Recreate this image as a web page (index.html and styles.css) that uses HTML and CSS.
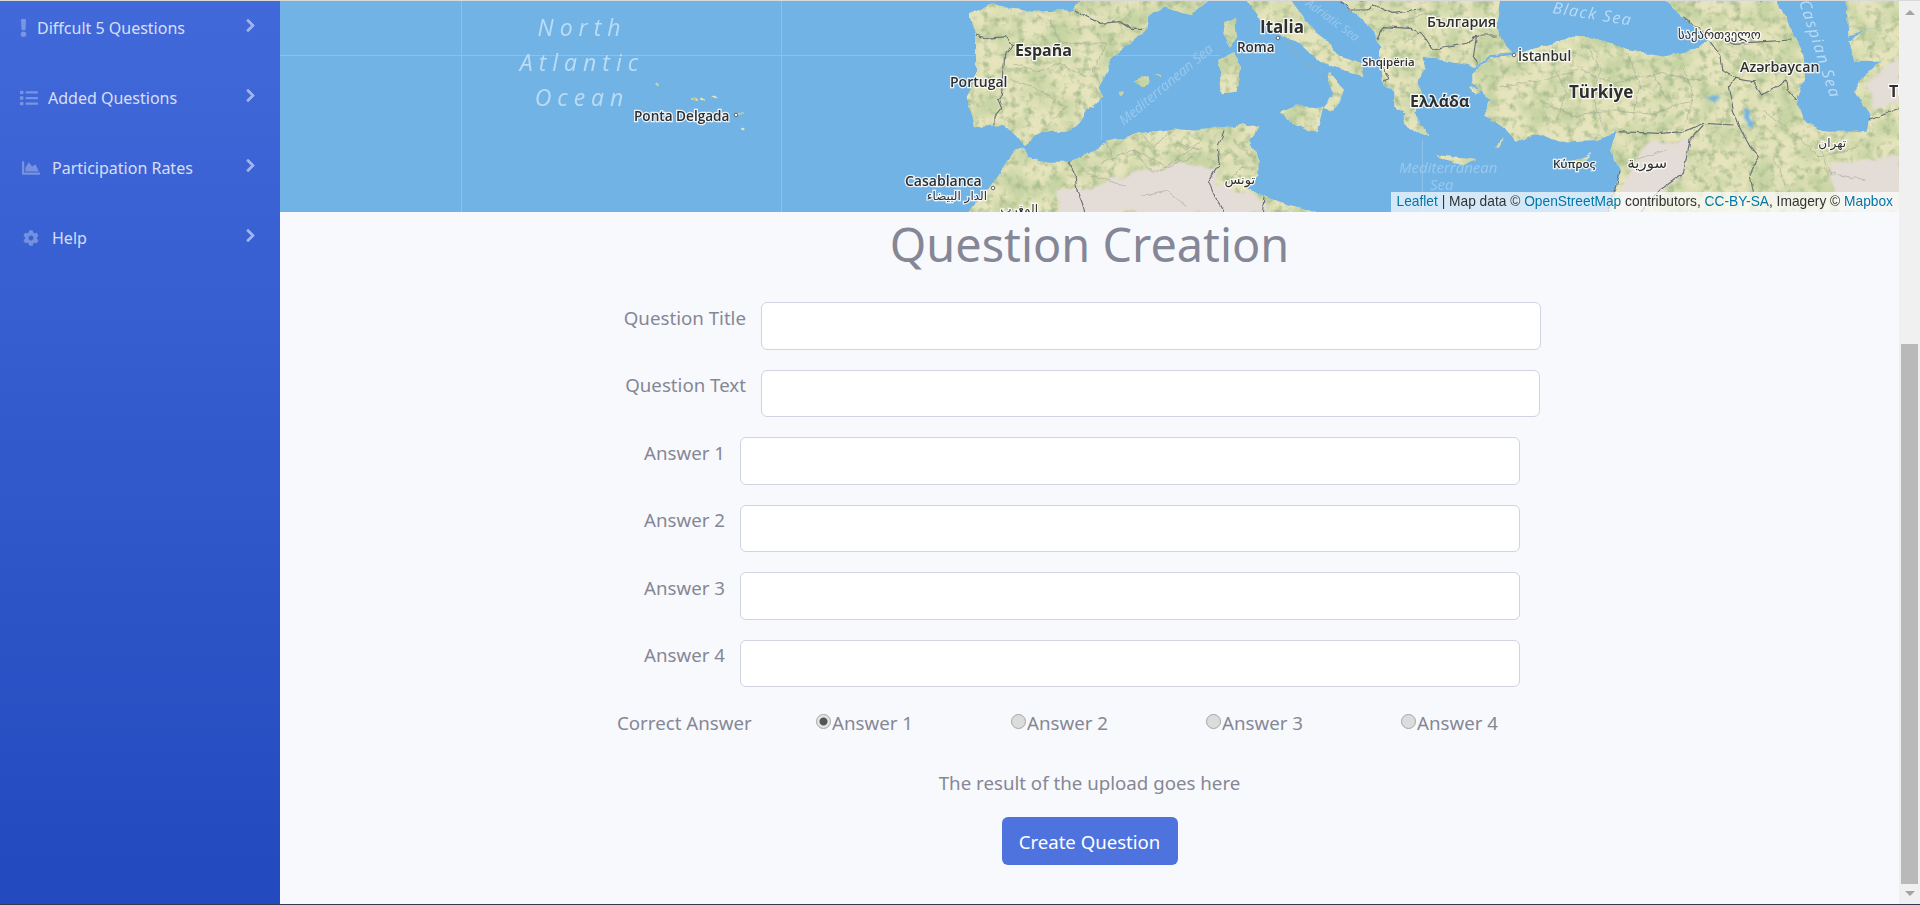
FILE: index.html
```html
<!DOCTYPE html>
<html lang="en">
<head>
    <meta charset="UTF-8">
    <meta name="viewport" content="width=device-width, initial-scale=1.0">
    <title>Question Creation</title>
    <link rel="stylesheet" href="styles.css">
</head>
<body>

    <div class="page">
        <nav class="sidebar">
            <a class="nav-item" href="#">
                <svg class="nav-icon icon-exclamation" viewBox="0 0 192 512"><path d="M176 432c0 44.112-35.888 80-80 80s-80-35.888-80-80 35.888-80 80-80 80 35.888 80 80zM25.26 25.199l13.6 272C39.499 310.972 50.041 320 64 320h64c13.959 0 24.501-9.028 25.14-22.801l13.6-272C167.401 11.5 156.859 0 144 0H48C35.141 0 24.599 11.5 25.26 25.199z"/></svg>
                <span class="nav-label">Diffcult 5 Questions</span>
                <svg class="nav-chevron" viewBox="0 0 320 512"><path d="M285.476 272.971L91.132 467.314c-9.373 9.373-24.569 9.373-33.941 0l-22.667-22.667c-9.357-9.357-9.375-24.522-.04-33.901L188.505 256 34.484 101.255c-9.335-9.379-9.317-24.544.04-33.901l22.667-22.667c9.373-9.373 24.569-9.373 33.941 0L285.475 239.03c9.373 9.372 9.373 24.568.001 33.941z"/></svg>
            </a>
            <a class="nav-item" href="#">
                <svg class="nav-icon icon-list" viewBox="0 0 512 512"><path d="M80 368H16a16 16 0 0 0-16 16v64a16 16 0 0 0 16 16h64a16 16 0 0 0 16-16v-64a16 16 0 0 0-16-16zm0-320H16A16 16 0 0 0 0 64v64a16 16 0 0 0 16 16h64a16 16 0 0 0 16-16V64a16 16 0 0 0-16-16zm0 160H16a16 16 0 0 0-16 16v64a16 16 0 0 0 16 16h64a16 16 0 0 0 16-16v-64a16 16 0 0 0-16-16zm416 176H176a16 16 0 0 0-16 16v32a16 16 0 0 0 16 16h320a16 16 0 0 0 16-16v-32a16 16 0 0 0-16-16zm0-320H176a16 16 0 0 0-16 16v32a16 16 0 0 0 16 16h320a16 16 0 0 0 16-16V80a16 16 0 0 0-16-16zm0 160H176a16 16 0 0 0-16 16v32a16 16 0 0 0 16 16h320a16 16 0 0 0 16-16v-32a16 16 0 0 0-16-16z"/></svg>
                <span class="nav-label">Added Questions</span>
                <svg class="nav-chevron" viewBox="0 0 320 512"><path d="M285.476 272.971L91.132 467.314c-9.373 9.373-24.569 9.373-33.941 0l-22.667-22.667c-9.357-9.357-9.375-24.522-.04-33.901L188.505 256 34.484 101.255c-9.335-9.379-9.317-24.544.04-33.901l22.667-22.667c9.373-9.373 24.569-9.373 33.941 0L285.475 239.03c9.373 9.372 9.373 24.568.001 33.941z"/></svg>
            </a>
            <a class="nav-item" href="#">
                <svg class="nav-icon icon-chart" viewBox="0 0 512 512"><path d="M500 384c6.6 0 12 5.4 12 12v40c0 6.6-5.4 12-12 12H12c-6.6 0-12-5.4-12-12V76c0-6.6 5.4-12 12-12h40c6.6 0 12 5.4 12 12v308h436zM372.7 159.5L288 216l-85.3-113.7c-5.1-6.8-15.5-6.3-19.9 1L96 248v104h384l-89.9-187.8c-3.2-6.5-11.4-8.7-17.4-4.7z"/></svg>
                <span class="nav-label">Participation Rates</span>
                <svg class="nav-chevron" viewBox="0 0 320 512"><path d="M285.476 272.971L91.132 467.314c-9.373 9.373-24.569 9.373-33.941 0l-22.667-22.667c-9.357-9.357-9.375-24.522-.04-33.901L188.505 256 34.484 101.255c-9.335-9.379-9.317-24.544.04-33.901l22.667-22.667c9.373-9.373 24.569-9.373 33.941 0L285.475 239.03c9.373 9.372 9.373 24.568.001 33.941z"/></svg>
            </a>
            <a class="nav-item" href="#">
                <svg class="nav-icon icon-cog" viewBox="0 0 512 512"><path d="M487.4 315.7l-42.6-24.6c4.3-23.2 4.3-47 0-70.2l42.6-24.6c4.9-2.8 7.1-8.6 5.5-14-11.1-35.6-30-67.8-54.7-94.6-3.8-4.1-10-5.1-14.8-2.3L380.8 110c-17.9-15.4-38.5-27.3-60.8-35.1V25.8c0-5.6-3.9-10.5-9.4-11.7-36.7-8.2-74.3-7.8-109.2 0-5.5 1.2-9.4 6.1-9.4 11.7V75c-22.2 7.9-42.8 19.8-60.8 35.1L88.7 85.5c-4.9-2.8-11-1.9-14.8 2.3-24.7 26.7-43.6 58.9-54.7 94.6-1.7 5.4.6 11.2 5.5 14L67.3 221c-4.3 23.2-4.3 47 0 70.2l-42.6 24.6c-4.9 2.8-7.1 8.6-5.5 14 11.1 35.6 30 67.8 54.7 94.6 3.8 4.1 10 5.1 14.8 2.3l42.6-24.6c17.9 15.4 38.5 27.3 60.8 35.1v49.2c0 5.6 3.9 10.5 9.4 11.7 36.7 8.2 74.3 7.8 109.2 0 5.5-1.2 9.4-6.1 9.4-11.7v-49.2c22.2-7.9 42.8-19.8 60.8-35.1l42.6 24.6c4.9 2.8 11 1.9 14.8-2.3 24.7-26.7 43.6-58.9 54.7-94.6 1.5-5.5-.7-11.3-5.6-14.1zM256 336c-44.1 0-80-35.9-80-80s35.9-80 80-80 80 35.9 80 80-35.9 80-80 80z"/></svg>
                <span class="nav-label">Help</span>
                <svg class="nav-chevron" viewBox="0 0 320 512"><path d="M285.476 272.971L91.132 467.314c-9.373 9.373-24.569 9.373-33.941 0l-22.667-22.667c-9.357-9.357-9.375-24.522-.04-33.901L188.505 256 34.484 101.255c-9.335-9.379-9.317-24.544.04-33.901l22.667-22.667c9.373-9.373 24.569-9.373 33.941 0L285.475 239.03c9.373 9.372 9.373 24.568.001 33.941z"/></svg>
            </a>
        </nav>

        <main class="main">
            <div class="map">
                <svg class="map-svg" viewBox="280 1 1619 211" width="1619" height="211">
                    <defs>
                        <filter id="land" filterUnits="userSpaceOnUse" x="280" y="0" width="1620" height="214" color-interpolation-filters="sRGB">
                            <feTurbulence type="fractalNoise" baseFrequency=".09" numOctaves="2" seed="4" result="wob"/>
                            <feDisplacementMap in="SourceGraphic" in2="wob" scale="6" xChannelSelector="R" yChannelSelector="G" result="shape"/>
                            <feTurbulence type="fractalNoise" baseFrequency=".04" numOctaves="3" seed="11"/>
                            <feColorMatrix type="matrix" values="0 0 0 0 .78  0 0 0 0 .83  0 0 0 0 .64  3 0 0 0 -1.2" result="green"/>
                            <feGaussianBlur in="green" stdDeviation="1" result="greenSoft"/>
                            <feComposite in="greenSoft" in2="shape" operator="in" result="tex"/>
                            <feTurbulence type="fractalNoise" baseFrequency=".12" numOctaves="3" seed="23"/>
                            <feColorMatrix type="matrix" values="0 0 0 0 .68  0 0 0 0 .75  0 0 0 0 .57  3 0 0 0 -1.45" result="dark"/>
                            <feGaussianBlur in="dark" stdDeviation=".7" result="darkSoft"/>
                            <feComposite in="darkSoft" in2="shape" operator="in" result="tex2"/>
                            <feMerge result="all"><feMergeNode in="shape"/><feMergeNode in="tex"/><feMergeNode in="tex2"/></feMerge>
                            <feGaussianBlur in="all" stdDeviation=".5"/>
                        </filter>
                        <filter id="desert" filterUnits="userSpaceOnUse" x="280" y="0" width="1620" height="214" color-interpolation-filters="sRGB">
                            <feTurbulence type="fractalNoise" baseFrequency=".05" numOctaves="3" seed="7"/>
                            <feDisplacementMap in="SourceGraphic" scale="12" xChannelSelector="R" yChannelSelector="G"/>
                            <feGaussianBlur stdDeviation="1"/>
                        </filter>
                        <filter id="wobble" filterUnits="userSpaceOnUse" x="280" y="0" width="1620" height="214" color-interpolation-filters="sRGB">
                            <feTurbulence type="fractalNoise" baseFrequency=".12" numOctaves="2" seed="3"/>
                            <feDisplacementMap in="SourceGraphic" scale="5" xChannelSelector="R" yChannelSelector="G"/>
                            <feGaussianBlur stdDeviation=".25"/>
                        </filter>
                    </defs>

                    <rect class="sea" x="280" y="0" width="1620" height="214"/>
                    <path class="seam" d="M461.5 0V212M781.5 0V212M280 55.5H1220M1101.5 100V140M1422.5 140V212"/>

                    <g filter="url(#land)">
                        <g class="land" transform="translate(900 0) scale(.33333)">
                            <path d="M210 45L270 8L300 20L400 35L520 30L545 0L925 0L870 45L790 22L745 48L738 90L700 122L640 170L612 225L595 262L610 292L560 330L530 380L490 395L420 395L375 435L340 400L310 375L222 382L200 290L228 240L228 110Z"/>
                            <path d="M205 640L270 560L345 450L375 445L385 470L440 485L505 485L560 465L620 425L720 400L830 385L900 390L970 385L1030 370L1075 385L1050 420L1075 470L1075 530L1040 560L1090 590L1255 640Z"/>
                            <path d="M1040 0L1085 60L1130 100L1200 130L1260 185L1300 200L1390 228L1380 190L1320 170L1280 120L1230 80L1170 0Z"/>
                            <path d="M1290 215L1332 270L1300 332L1270 325L1300 285L1280 230Z"/>
                            <path d="M1135 335L1180 320L1270 320L1250 400L1180 370Z"/>
                            <path d="M955 180L1005 155L1020 200L1010 275L965 280Z"/>
                            <path d="M975 70L1005 55L1010 110L990 140L970 100Z"/>
                            <path d="M705 240L745 225L750 250L730 262Z"/>
                            <path d="M768 222L785 225L785 232Z"/>
                            <path d="M658 275L672 280L660 290Z"/>
                        </g>
                        <g class="land" transform="translate(1400 0) scale(.33333)">
                            <path d="M-180 0L-150 30L-80 90L-60 140L-60 180L-55 240L-20 280L-20 320L20 340L5 370L60 400L90 410L40 340L70 290L50 240L80 210L70 170L230 200L270 165L340 160L300 120L290 70L300 0Z"/>
                            <path d="M220 220L270 172L340 165L440 135L530 110L600 115L680 150L790 170L880 150L930 120L850 50L790 0L1130 0L1170 80L1205 150L1215 230L1190 290L1210 360L1280 395L1400 395L1410 340L1365 275L1390 230L1440 185L1360 185L1345 125L1390 90L1440 90L1500 150L1500 640L620 640L660 510L630 450L650 395L590 420L480 425L410 400L350 425L310 380L250 350L270 300L220 250Z"/>
                            <path d="M1340 0L1500 0L1500 150L1440 90L1390 88L1345 110Z"/>
                            <path d="M110 465L225 480L190 495L130 480Z"/>
                            <path d="M510 490L578 458L540 492L512 502Z"/>
                            <path d="M210 260L240 270L225 280Z"/>
                            <path d="M285 440L308 415L300 440Z"/>
                        </g>
                        <g class="land">
                            <ellipse cx="657" cy="84" rx="1.5" ry="1.2"/>
                            <ellipse cx="694" cy="100" rx="4" ry="1.2"/>
                            <ellipse cx="703" cy="99" rx="3" ry="1.2"/>
                            <ellipse cx="714" cy="97" rx="2.5" ry="1.2"/>
                            <ellipse cx="741" cy="114" rx="3" ry="1.2"/>
                            <ellipse cx="744" cy="128" rx="1.5" ry="1.2"/>
                        </g>
                    </g>

                    <g class="desert" filter="url(#desert)">
                        <g transform="translate(900 0) scale(.33333)">
                            <path d="M480 640L475 560L560 570L700 520L830 490L960 500L940 545L1000 570L1090 600L1100 640Z"/>
                        </g>
                        <g transform="translate(1400 0) scale(.33333)">
                            <path d="M650 640L680 530L740 430L870 420L850 520L790 570L730 640Z"/>
                            <path d="M1290 490L1500 470L1500 640L1310 640Z"/>
                            <path d="M1400 250L1500 170L1500 300L1430 330Z"/>
                        </g>
                    </g>

                    <g class="water" filter="url(#desert)">
                        <g transform="translate(1400 0) scale(.33333)">
                            <path d="M915 300L960 282L945 312Z"/>
                            <path d="M1030 320L1045 325L1060 372L1045 380Z"/>
                        </g>
                    </g>

                    <g class="border" filter="url(#wobble)">
                        <g transform="translate(900 0) scale(.33333)">
                            <path d="M525 30L560 50L600 70L660 65L690 85L738 85"/>
                            <path d="M228 105L260 115L320 110L335 135L310 180L305 280L295 300L305 325L285 350L285 378"/>
                            <path d="M505 487L525 520L530 570L550 620L555 640"/>
                            <path d="M972 392L955 440L960 490L925 545L945 590L975 640"/>
                            <path d="M1095 590L1090 640"/>
                            <path d="M1320 0L1350 30L1400 30L1420 15L1480 40L1560 30"/>
                            <path d="M1430 120L1450 80L1530 85L1560 100"/>
                            <path d="M1440 180L1470 240L1450 245"/>
                        </g>
                        <g transform="translate(1400 0) scale(.33333)">
                            <path d="M850 50L900 90L1000 130L1090 125L1175 120"/>
                            <path d="M930 125L960 165L965 210L1005 235L985 260L1000 330L1020 385L1050 440L1075 470L1050 520L1060 575"/>
                            <path d="M650 395L780 400L850 395L910 370L1000 375"/>
                            <path d="M910 375L870 420L850 520L780 570L720 640"/>
                            <path d="M1005 235L1060 245L1085 285L1130 260L1160 240L1165 270L1190 300"/>
                            <path d="M60 90L100 150L200 130L240 105L290 105"/>
                            <path d="M230 105L220 170L235 190"/>
                            <path d="M660 510L650 560L620 640"/>
                            <path d="M1410 360L1500 325"/>
                        </g>
                    </g>

                    <g class="border-thin" filter="url(#wobble)">
                        <g transform="translate(900 0) scale(.33333)">
                            <path d="M340 190L420 215L480 190L560 230M400 260L500 320L440 380M330 240L400 260M545 130L620 130L580 210L600 250M450 60L480 130L545 130M600 490L700 450L800 500L900 430M560 520L680 560M700 450L760 520L880 470M620 425L640 480M720 400L760 440L830 385M830 430L900 450M1000 420L1050 470M1030 500L990 540M720 590L800 570L860 620M1150 110L1230 200L1290 230M1100 70L1170 60"/>
                        </g>
                        <g transform="translate(1400 0) scale(.33333)">
                            <path d="M300 260L420 240L540 210L640 250L780 220L900 240M420 300L520 350L640 330L760 340L880 300M460 200L500 280L470 360M760 220L800 300M560 130L600 210L580 300L620 400M680 160L720 250L700 340M850 190L880 290L860 370M1090 330L1180 400L1260 470L1380 440M1120 470L1160 560M1100 180L1130 230M1250 420L1290 520L1400 540M700 480L800 450M10 60L90 40L180 80M10 130L60 100"/>
                        </g>
                    </g>

                    <g class="city-dot">
                        <circle cx="736" cy="115" r="1.8"/>
                        <circle cx="1278" cy="38" r="1.8"/>
                        <circle cx="993" cy="188" r="1.8"/>
                        <circle cx="1514" cy="55" r="1.8"/>
                    </g>

                    <text class="ocean" x="582" y="36" text-anchor="middle">North</text>
                    <text class="ocean" x="582" y="71" text-anchor="middle">Atlantic</text>
                    <text class="ocean" x="582" y="106" text-anchor="middle">Ocean</text>

                    <text class="sea-label" font-size="14" transform="translate(1124 126) rotate(-40)">Mediterranean Sea</text>
                    <text class="sea-label" font-size="12" transform="translate(1305 5) rotate(36)">Adriatic Sea</text>
                    <text class="sea-label" font-size="15" x="1399" y="173">Mediterranean</text>
                    <text class="sea-label" font-size="15" x="1430" y="190">Sea</text>
                    <text class="sea-label spaced" font-size="16" transform="translate(1552 13) rotate(9)">Black Sea</text>
                    <text class="sea-label spaced" font-size="16" transform="translate(1799 2) rotate(72)">Caspian Sea</text>

                    <text class="place" font-size="13.6" x="634" y="121">Ponta Delgada</text>
                    <text class="place strong" font-size="17" x="1260" y="33">Italia</text>
                    <text class="place strong" font-size="16" x="1015" y="56">España</text>
                    <text class="place" font-size="13.5" x="1237" y="52">Roma</text>
                    <text class="place" font-size="14" x="950" y="87">Portugal</text>
                    <text class="place" font-size="11.5" x="1362" y="66">Shqipëria</text>
                    <text class="place" font-size="14" x="905" y="186">Casablanca</text>
                    <text class="place arabic" font-size="12" x="987" y="200" text-anchor="end">الدار البيضاء</text>
                    <text class="place arabic" font-size="12" x="1038" y="213" text-anchor="end">المغرب</text>
                    <text class="place arabic" font-size="13" x="1255" y="184" text-anchor="end">تونس</text>
                    <text class="place" font-size="14.3" x="1427" y="27">България</text>
                    <text class="place" font-size="13.5" x="1518" y="61">İstanbul</text>
                    <text class="place georgian" font-size="12.7" x="1678" y="39">საქართველო</text>
                    <text class="place" font-size="14.2" x="1740" y="72">Azərbaycan</text>
                    <text class="place strong" font-size="16" x="1410" y="107">Ελλάδα</text>
                    <text class="place strong" font-size="17" x="1569" y="98">Türkiye</text>
                    <text class="place" font-size="11.5" x="1553" y="168">Κύπρος</text>
                    <text class="place arabic" font-size="15" x="1667" y="168" text-anchor="end">سورية</text>
                    <text class="place arabic" font-size="12" x="1846" y="147" text-anchor="end">تهران</text>
                    <text class="place strong" font-size="16" x="1889" y="97">Türkmenistan</text>
                </svg>
                <div class="attribution"><a href="#">Leaflet</a> | Map data © <a href="#">OpenStreetMap</a> contributors, <a href="#">CC-BY-SA</a>, Imagery © <a href="#">Mapbox</a></div>
            </div>

            <h1 class="title">Question Creation</h1>

            <form class="question-form">
                <div class="form-row">
                    <label class="form-label" for="questionTitle">Question Title</label>
                    <input class="form-input" type="text" id="questionTitle">
                </div>
                <div class="form-row">
                    <label class="form-label" for="questionText">Question Text</label>
                    <input class="form-input text-input" type="text" id="questionText">
                </div>
                <div class="form-row answer-row">
                    <label class="form-label" for="answer1">Answer 1</label>
                    <input class="form-input" type="text" id="answer1">
                </div>
                <div class="form-row answer-row">
                    <label class="form-label" for="answer2">Answer 2</label>
                    <input class="form-input" type="text" id="answer2">
                </div>
                <div class="form-row answer-row">
                    <label class="form-label" for="answer3">Answer 3</label>
                    <input class="form-input" type="text" id="answer3">
                </div>
                <div class="form-row answer-row">
                    <label class="form-label" for="answer4">Answer 4</label>
                    <input class="form-input" type="text" id="answer4">
                </div>

                <div class="correct-row">
                    <span>Correct Answer</span>
                    <label class="radio-option"><input type="radio" name="correct" checked>Answer 1</label>
                    <label class="radio-option"><input type="radio" name="correct">Answer 2</label>
                    <label class="radio-option"><input type="radio" name="correct">Answer 3</label>
                    <label class="radio-option"><input type="radio" name="correct">Answer 4</label>
                </div>

                <p class="upload-result">The result of the upload goes here</p>
                <button class="create-btn" type="button">Create Question</button>
            </form>
        </main>

        <div class="scrollbar">
            <span class="arrow-up"></span>
            <span class="scroll-thumb"></span>
            <span class="arrow-down"></span>
        </div>
    </div>
    <div class="screen-edge"></div>

</body>
</html>
```

FILE: styles.css
```css
* {
    box-sizing: border-box;
}

body {
    margin: 0;
    height: 905px;
    overflow: hidden;
    display: flex;
    flex-direction: column;
    border-top: 1px solid #d9d9d9;
    background: #f8f9fc;
    color: #858796;
    font-family: "Noto Sans", "Open Sans", sans-serif;
}

.page {
    flex: 1;
    min-height: 0;
    display: flex;
}

.screen-edge {
    height: 1px;
    background: #3b3352;
}

/* sidebar */
.sidebar {
    width: 280px;
    flex-shrink: 0;
    padding-top: 7px;
    display: flex;
    flex-direction: column;
    gap: 30px;
    background: linear-gradient(180deg, #4269da 0%, #224abe 100%);
}

.nav-item {
    height: 40px;
    display: flex;
    align-items: center;
    padding: 0 25px 0 20px;
    color: rgba(255, 255, 255, 0.8);
    font-size: 16px;
    text-decoration: none;
}

.nav-icon {
    height: 18px;
    fill: rgba(255, 255, 255, 0.3);
    flex-shrink: 0;
}

.icon-exclamation {
    width: 7px;
    margin-right: 10px;
}

.icon-list {
    width: 18px;
    margin-right: 10px;
}

.icon-chart {
    width: 18px;
    margin-left: 2px;
    margin-right: 12px;
}

.icon-cog {
    width: 16px;
    margin-left: 3px;
    margin-right: 13px;
}

.nav-label {
    flex: 1;
}

.nav-chevron {
    width: 9px;
    height: 15px;
    margin-bottom: 5px;
    fill: #a0b3ea;
    stroke: #a0b3ea;
    stroke-width: 30;
}

/* main column */
.main {
    flex: 1;
    min-width: 0;
}

.map {
    position: relative;
    height: 211px;
    overflow: hidden;
}

.map-svg {
    display: block;
}

.sea,
.water {
    fill: #72b3e6;
}

.seam {
    stroke: #8cc1ea;
    stroke-width: 1;
    fill: none;
}

.land {
    fill: #e6e4bc;
}

.desert {
    fill: #e4dcd6;
}

.border {
    fill: none;
    stroke: #6a7076;
    stroke-width: 3.4;
}

.border-thin {
    fill: none;
    stroke: #a0a794;
    stroke-width: 1.8;
}

.city-dot {
    fill: #f4f4f4;
    stroke: #666;
    stroke-width: 1;
}

.ocean {
    font-family: "Open Sans", sans-serif;
    font-style: italic;
    font-size: 23px;
    letter-spacing: 6px;
    fill: #bcdcf4;
}

.sea-label {
    font-family: "Open Sans", sans-serif;
    font-style: italic;
    fill: #98c9ee;
}

.spaced {
    letter-spacing: 1.5px;
    fill: #bcdcf4;
}

.place {
    font-family: "Open Sans", "DejaVu Sans", sans-serif;
    font-weight: 600;
    fill: #2f2f2f;
    stroke: rgba(255, 255, 255, 0.85);
    stroke-width: 2.5px;
    paint-order: stroke;
    filter: blur(0.3px);
}

.strong {
    font-weight: 700;
}

.arabic,
.georgian {
    font-family: "DejaVu Sans", sans-serif;
    font-weight: 400;
}

.attribution {
    position: absolute;
    right: 0;
    bottom: 0;
    height: 20px;
    padding: 0 6px;
    background: rgba(255, 255, 255, 0.7);
    color: #333;
    font-family: "Liberation Sans", Arial, sans-serif;
    font-size: 13.75px;
    line-height: 20px;
    white-space: nowrap;
}

.attribution a {
    color: #0078a8;
    text-decoration: none;
}

/* form */
.title {
    margin: 0 0 20px;
    height: 70px;
    color: #858796;
    font-size: 46.8px;
    font-weight: 400;
    line-height: 65px;
    text-align: center;
}

.question-form {
    width: 1001px;
    margin: 0 auto;
    display: flex;
    flex-direction: column;
    gap: 20px;
}

.form-row {
    display: flex;
    justify-content: flex-end;
    gap: 15px;
    padding-right: 49px;
}

.answer-row {
    padding-right: 70px;
}

.form-label {
    padding-top: 1.5px;
    font-size: 18.7px;
    line-height: 27px;
}

.form-input {
    width: 780px;
    height: 47.5px;
    padding: 6px 12px;
    background: #fff;
    border: 1px solid #d1d3e2;
    border-radius: 6px;
}

.text-input {
    width: 779px;
    margin-right: 1px;
}

.correct-row {
    display: grid;
    grid-template-columns: 199px repeat(4, 195px);
    align-items: center;
    padding-left: 28px;
    margin-top: 2px;
    font-size: 18.7px;
    line-height: 27px;
}

.radio-option {
    display: flex;
    align-items: center;
}

.radio-option input {
    appearance: none;
    width: 15px;
    height: 15px;
    margin: 0 1px 3px 0;
    border: 1px solid #a5a5a5;
    border-radius: 50%;
    background: #dcdcdc;
}

.radio-option input:checked {
    background: radial-gradient(circle, #555 0, #555 3.5px, #e4e4e4 4.5px);
}

.upload-result {
    margin: 13px 0 0;
    font-size: 18.7px;
    line-height: 27px;
    text-align: center;
}

.create-btn {
    align-self: center;
    width: 176px;
    height: 48px;
    margin-top: 1px;
    background: #4e73df;
    border: none;
    border-radius: 6px;
    color: #fff;
    font-family: inherit;
    font-size: 18.6px;
    cursor: pointer;
}

/* browser scrollbar drawn by hand, the page is shown scrolled down */
.scrollbar {
    width: 21px;
    flex-shrink: 0;
    display: flex;
    flex-direction: column;
    align-items: center;
    background: #f0f0f0;
}

.arrow-up {
    margin-top: 9px;
    border-left: 5px solid transparent;
    border-right: 5px solid transparent;
    border-bottom: 5px solid #a3a3a3;
}

.scroll-thumb {
    width: 17px;
    height: 540px;
    margin-top: auto;
    background: #b9b9b9;
}

.arrow-down {
    margin: 7px 0 8px;
    border-left: 5px solid transparent;
    border-right: 5px solid transparent;
    border-top: 5px solid #a3a3a3;
}
```
